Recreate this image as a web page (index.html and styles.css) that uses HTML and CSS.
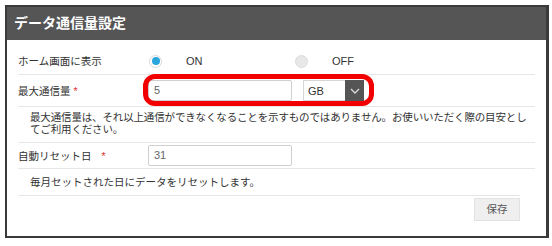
FILE: index.html
```html
<!DOCTYPE html>
<html lang="ja">
<head>
<meta charset="utf-8">
<link rel="stylesheet" href="styles.css">
</head>
<body>
<div class="frame">
  <div class="header">データ通信量設定</div>
  <div class="body">
    <div class="row r1">
      <div class="label">ホーム画面に表示</div>
      <div class="radios">
        <div class="opt"><span class="radio on"></span><span class="rlabel">ON</span></div>
        <div class="opt"><span class="radio"></span><span class="rlabel">OFF</span></div>
      </div>
    </div>
    <div class="row r2">
      <div class="label">最大通信量 <span class="req">*</span></div>
      <div class="field">
        <div class="input">5</div>
        <div class="select"><span class="sval">GB</span><span class="arrow"><svg width="10" height="6" viewBox="0 0 10 6"><path d="M1 1 L5 5 L9 1" fill="none" stroke="#ddd" stroke-width="1.3"/></svg></span></div>
        <div class="ring"></div>
      </div>
    </div>
    <div class="desc d1"><p class="dtext">最大通信量は、それ以上通信ができなくなることを示すものではありません。お使いいただく際の目安としてご利用ください。</p></div>
    <div class="row r3">
      <div class="label">自動リセット日 <span class="req req2">*</span></div>
      <div class="input">31</div>
    </div>
    <div class="desc d2">毎月セットされた日にデータをリセットします。</div>
    <div class="footer">
      <div class="btn">保存</div>
    </div>
  </div>
</div>
</body>
</html>
```

FILE: styles.css
```css
html, body {
  margin: 0;
  padding: 0;
  background: #fff;
}
body {
  font-family: "Liberation Sans", "Noto Sans CJK JP", sans-serif;
  color: #333;
  font-size: 10.5px;
}
.frame {
  margin: 5px 0 0 5px;
  width: 539px;
  height: 229px;
  border: 2px solid #3a3a3a;
  border-right-width: 3px;
  box-sizing: content-box;
}
.header {
  height: 33px;
  background: #555;
  color: #fff;
  font-weight: bold;
  font-size: 14px;
  line-height: 33px;
  padding-left: 7px;
}
.body {
  padding: 8px 11px 0 11px;
}
.row {
  display: flex;
  align-items: center;
  border-bottom: 1px solid #e6e6e6;
}
.r1 { height: 26px; }
.r2 { height: 31px; }
.r3 { height: 25px; }
.label {
  width: 130px;
  flex: none;
  line-height: 14px;
}
.req { color: #e53030; }
.req2 { margin-left: 7px; }
.radios {
  display: flex;
}
.opt {
  width: 145px;
  display: flex;
  align-items: center;
  margin-left: 1px;
}
.radio {
  width: 13px;
  height: 13px;
  border-radius: 50%;
  background: #e8e8e8;
  border: 1px solid #dcdcdc;
  box-sizing: border-box;
  margin-right: 24px;
  position: relative;
}
.radio.on {
  background: #fff;
  border-color: #d8d8d8;
}
.radio.on::after {
  content: "";
  position: absolute;
  left: 1.5px;
  top: 1.5px;
  width: 8px;
  height: 8px;
  border-radius: 50%;
  background: #2aa6dc;
}
.rlabel {
  font-size: 11px;
  color: #333;
}
.field {
  display: flex;
  align-items: center;
  position: relative;
}
.input {
  width: 144px;
  height: 21px;
  box-sizing: border-box;
  border: 1px solid #cfcfcf;
  border-radius: 2px;
  font-size: 11px;
  color: #666;
  line-height: 19px;
  padding-left: 5px;
}
.select {
  margin-left: 11px;
  width: 61px;
  height: 21px;
  box-sizing: border-box;
  border: 1px solid #d6d6d6;
  display: flex;
  align-items: center;
}
.sval {
  flex: 1;
  padding-left: 4px;
  font-size: 11px;
  color: #333;
}
.arrow {
  width: 19px;
  height: 21px;
  margin: -1px -1px -1px 0;
  background: #555;
  display: flex;
  align-items: center;
  justify-content: center;
}
.ring {
  position: absolute;
  left: -5px;
  top: -6px;
  width: 231px;
  height: 32px;
  box-sizing: border-box;
  border: 5px solid #f20000;
  border-radius: 12px;
}
.desc {
  border-bottom: 1px solid #e6e6e6;
  padding-left: 12px;
  line-height: 12px;
  box-sizing: border-box;
}
.d1 {
  height: 36px;
  padding-top: 4px;
}
.dtext {
  margin: 0;
  letter-spacing: -0.15px;
}
.d2 {
  height: 27px;
  line-height: 26px;
  margin-right: 15px;
}
.footer {
  display: flex;
  justify-content: flex-end;
  padding-right: 15px;
  padding-top: 2px;
}
.btn {
  width: 46px;
  height: 23px;
  box-sizing: border-box;
  background: #efefef;
  border: 1px solid #e2e2e2;
  font-size: 10.5px;
  color: #555;
  line-height: 21px;
  text-align: center;
}
```
